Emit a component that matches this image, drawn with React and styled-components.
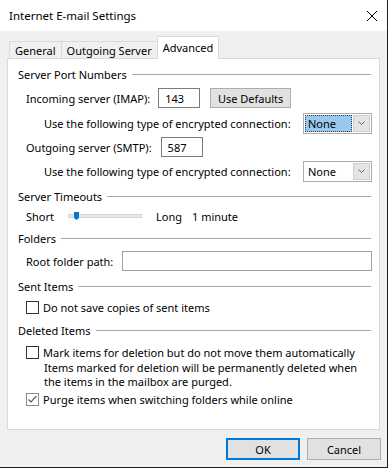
import styled, { createGlobalStyle } from "styled-components";

const GlobalStyle = createGlobalStyle`
  html, body {
    margin: 0;
    padding: 0;
    background: #1e1e1e;
  }
  body {
    font-family: "Noto Sans", "Liberation Sans", sans-serif;
    font-size: 11px;
    color: #000;
  }
`;

const Window = styled.div`
  width: 387px;
  height: 467px;
  display: flex;
  flex-direction: column;
  background: #f0f0f0;
  overflow: hidden;
`;

const TitleBar = styled.div`
  height: 31px;
  flex: none;
  box-sizing: border-box;
  padding: 0 10px 0 9px;
  background: #fff;
  display: flex;
  align-items: center;
  justify-content: space-between;
  font-size: 11.5px;
`;

const Body = styled.div`
  flex: 1;
  display: flex;
  flex-direction: column;
  padding: 5px 7px 0 7px;
`;

const TabStrip = styled.div`
  height: 23px;
  margin-bottom: -1px;
  padding-left: 2px;
  display: flex;
  align-items: flex-end;
  position: relative;
  z-index: 1;
`;

const Tab = styled.div`
  box-sizing: border-box;
  display: flex;
  align-items: center;
  justify-content: center;
  border: 1px solid #d9d9d9;
  border-bottom: none;
  margin-left: -1px;
  height: ${(p) => (p.$active ? "23px" : "17px")};
  margin-bottom: ${(p) => (p.$active ? "0" : "1px")};
  padding: ${(p) => (p.$active ? "0 5px 1px" : "0 5px")};
  background: ${(p) => (p.$active ? "#fff" : "#f0f0f0")};
  &:first-child {
    margin-left: 0;
  }
`;

const Panel = styled.div`
  box-sizing: border-box;
  height: 372px;
  background: #fff;
  border: 1px solid #d9d9d9;
  padding: 7px 7px 0 10px;
  display: flex;
  flex-direction: column;
`;

const Group = styled.div`
  height: 16px;
  margin-top: ${(p) => p.$top || 0}px;
  margin-right: 1px;
  display: flex;
  align-items: center;
  gap: 5px;
  &::after {
    content: "";
    flex: 1;
    height: 1px;
    background: #a8a8a8;
  }
`;

const Row = styled.div`
  display: flex;
  align-items: center;
  height: ${(p) => p.$h || 20}px;
  margin-top: ${(p) => p.$top || 0}px;
  padding-left: ${(p) => p.$indent || 8}px;
  white-space: nowrap;
`;

const TextBox = styled.div`
  box-sizing: border-box;
  height: 20px;
  width: ${(p) => (p.$w ? `${p.$w}px` : "auto")};
  flex: ${(p) => (p.$w ? "none" : 1)};
  margin-left: ${(p) => p.$gap || 8}px;
  border: 1px solid ${(p) => (p.$muted ? "#a0a0a0" : "#7a7a7a")};
  padding-left: 6px;
  display: flex;
  align-items: center;
  background: #fff;
`;

const Button = styled.div`
  box-sizing: border-box;
  width: ${(p) => p.$w}px;
  height: ${(p) => p.$h || 22}px;
  margin-left: ${(p) => p.$gap || 0}px;
  display: flex;
  align-items: center;
  justify-content: center;
  background: #e1e1e1;
  border: ${(p) => (p.$default ? "2px solid #0078d7" : "1px solid #adadad")};
`;

const Select = styled.div`
  box-sizing: border-box;
  width: 69px;
  height: 21px;
  margin-left: auto;
  border: 1px solid #acacac;
  padding: 1px;
  display: flex;
  gap: 1px;
  background: #fff;
`;

const SelectValue = styled.div`
  flex: 1;
  display: flex;
  align-items: center;
  padding-left: 3px;
  background: ${(p) => (p.$focused ? "#99c9ef" : "#fff")};
  outline: ${(p) => (p.$focused ? "1px dotted #3a3a3a" : "none")};
  outline-offset: -1px;
`;

const SelectArrow = styled.div`
  width: 17px;
  box-sizing: border-box;
  border: 1px solid #cfcfcf;
  background: #e5e5e5;
  display: flex;
  align-items: center;
  justify-content: center;
`;

const Track = styled.div`
  position: relative;
  box-sizing: border-box;
  width: 74px;
  height: 4px;
  margin: 0 14px 0 14px;
  background: #e7eaea;
  border: 1px solid #d6d6d6;
`;

const Thumb = styled.span`
  position: absolute;
  left: 5px;
  top: -3px;
  width: 5px;
  height: 8px;
  background: #0078d7;
  clip-path: polygon(0 0, 100% 0, 100% 75%, 50% 100%, 0 75%);
`;

const Box = styled.span`
  box-sizing: border-box;
  width: 13px;
  height: 13px;
  flex: none;
  margin-right: 4px;
  border: 1px solid ${(p) => (p.$checked ? "#8a8a8a" : "#333")};
  background: #fff;
  display: flex;
  align-items: center;
  justify-content: center;
`;

const Note = styled.div`
  margin-top: 1px;
  padding-left: 26px;
  line-height: 14px;
`;

const Footer = styled.div`
  display: flex;
  justify-content: flex-end;
  gap: 7px;
  margin: 8px -1px 0 0;
`;

const Spacer = styled.span`
  margin-left: ${(p) => p.$gap}px;
`;

const Gap = styled.div`
  margin-top: ${(p) => p.$top}px;
`;

function Chevron() {
  return (
    <svg width="7" height="4" viewBox="0 0 7 4">
      <polyline points="0.5,0.5 3.5,3.5 6.5,0.5" fill="none" stroke="#606060" strokeWidth="1" />
    </svg>
  );
}

function Combo({ focused }) {
  return (
    <Select>
      <SelectValue $focused={focused}>None</SelectValue>
      <SelectArrow>
        <Chevron />
      </SelectArrow>
    </Select>
  );
}

function Check({ checked, children }) {
  return (
    <Row $h={16}>
      <Box $checked={checked}>
        {checked && (
          <svg width="11" height="11" viewBox="0 0 11 11">
            <polyline points="1.5,5.5 4,8 9.5,2" fill="none" stroke="#5a5a5a" strokeWidth="1.2" />
          </svg>
        )}
      </Box>
      {children}
    </Row>
  );
}

export default function App() {
  return (
    <>
      <GlobalStyle />
      <Window>
        <TitleBar>
          <span>Internet E-mail Settings</span>
          <svg width="10" height="10" viewBox="0 0 10 10">
            <path d="M0 0L10 10M10 0L0 10" stroke="#000" strokeWidth="1" />
          </svg>
        </TitleBar>
        <Body>
          <TabStrip>
            <Tab>General</Tab>
            <Tab>Outgoing Server</Tab>
            <Tab $active>Advanced</Tab>
          </TabStrip>
          <Panel>
            <Group>Server Port Numbers</Group>
            <Row $top={6}>
              Incoming server (IMAP):
              <TextBox $w={42}>143</TextBox>
              <Button $w={81} $h={20} $gap={10}>Use Defaults</Button>
            </Row>
            <Row $top={5} $indent={26}>
              Use the following type of encrypted connection:
              <Combo focused />
            </Row>
            <Row $top={4}>
              Outgoing server (SMTP):
              <TextBox $w={42} $gap={9}>587</TextBox>
            </Row>
            <Row $top={4} $indent={26}>
              Use the following type of encrypted connection:
              <Combo />
            </Row>

            <Group $top={7}>Server Timeouts</Group>
            <Row $top={4} $h={16}>
              Short
              <Track>
                <Thumb />
              </Track>
              Long
              <Spacer $gap={10}>1 minute</Spacer>
            </Row>

            <Group $top={6}>Folders</Group>
            <Row $top={5}>
              Root folder path:
              <TextBox $muted $gap={9} />
            </Row>

            <Group $top={7}>Sent Items</Group>
            <Gap $top={5}>
              <Check>Do not save copies of sent items</Check>
            </Gap>

            <Group $top={7}>Deleted Items</Group>
            <Gap $top={6}>
              <Check>Mark items for deletion but do not move them automatically</Check>
            </Gap>
            <Note>
              Items marked for deletion will be permanently deleted when
              <br />
              the items in the mailbox are purged.
            </Note>
            <Gap $top={2}>
              <Check checked>Purge items when switching folders while online</Check>
            </Gap>
          </Panel>
          <Footer>
            <Button $w={74} $default>OK</Button>
            <Button $w={74}>Cancel</Button>
          </Footer>
        </Body>
      </Window>
    </>
  );
}
